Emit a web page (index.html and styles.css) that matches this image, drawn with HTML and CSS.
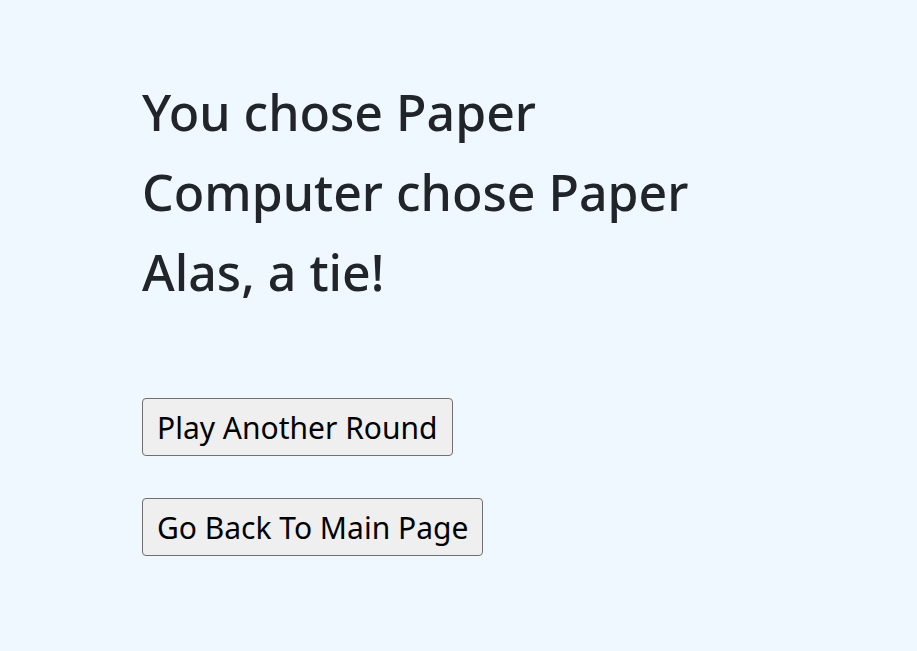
FILE: index.html
```html
<!DOCTYPE html>
<html lang="en">
<head>
<meta charset="utf-8">
<title>Rock Paper Scissors</title>
<link rel="stylesheet" href="styles.css">
</head>
<body>
<main class="page">
  <section class="result">
    <div class="line">You chose Paper</div>
    <div class="line">Computer chose Paper</div>
    <div class="line">Alas, a tie!</div>
  </section>
  <div class="actions">
    <button class="btn" type="button">Play Another Round</button>
    <button class="btn" type="button">Go Back To Main Page</button>
  </div>
</main>
</body>
</html>
```
FILE: styles.css
```css
html, body {
  margin: 0;
  padding: 0;
  background: #f0f8ff;
}
body {
  font-family: "Noto Sans", "Open Sans", sans-serif;
  color: #212529;
}
.page {
  padding: 72px 0 0 142px;
}
.result {
  display: flex;
  flex-direction: column;
}
.line {
  font-size: 50px;
  font-weight: 500;
  line-height: 80px;
}
.actions {
  margin-top: 86px;
  display: flex;
  flex-direction: column;
  align-items: flex-start;
  gap: 42px;
}
.btn {
  font-family: "Noto Sans", "Open Sans", sans-serif;
  font-size: 30px;
  color: #000;
  background: #efefef;
  border: 1px solid #6f6f6f;
  border-radius: 4px;
  height: 58px;
  padding: 2px 14px 0;
  margin: 0;
  line-height: 1;
}
```
